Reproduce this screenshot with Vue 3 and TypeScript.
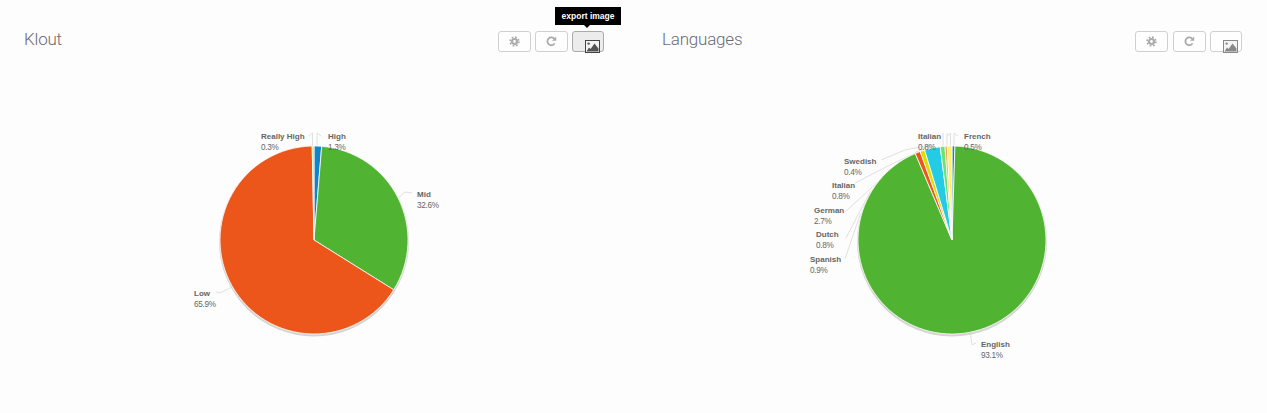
<script setup lang="ts">
interface Slice { from: number; to: number; color: string }
interface Label { x: number; y: number; name: string; value: string }
interface Chart {
  title: string
  viewBox: string
  cx: number
  slices: Slice[]
  lines: string[]
  labels: Label[]
  tip: boolean
}

const CY = 240
const R = 94

function slicePath(cx: number, s: Slice): string {
  const rad = (d: number) => (d * Math.PI) / 180
  const x1 = cx + R * Math.sin(rad(s.from))
  const y1 = CY - R * Math.cos(rad(s.from))
  const x2 = cx + R * Math.sin(rad(s.to))
  const y2 = CY - R * Math.cos(rad(s.to))
  const large = s.to - s.from > 180 ? 1 : 0
  return `M${cx} ${CY}L${x1.toFixed(2)} ${y1.toFixed(2)}A${R} ${R} 0 ${large} 1 ${x2.toFixed(2)} ${y2.toFixed(2)}Z`
}

const charts: Chart[] = [
  {
    title: 'Klout',
    viewBox: '0 70 638 343',
    cx: 314,
    tip: true,
    slices: [
      { from: 0, to: 4.7, color: '#0f84c8' },
      { from: 4.7, to: 122, color: '#50b432' },
      { from: 122, to: 358.9, color: '#ed561b' },
      { from: 358.9, to: 360, color: '#dddf00' },
    ],
    lines: [
      '312.5 150 312.5 133 309 136',
      '317 150 317 133 321 136',
      '396 200 405 192 412 193',
      '234 286 220 293 216 292',
    ],
    labels: [
      { x: 261, y: 139, name: 'Really High', value: '0.3%' },
      { x: 328, y: 139, name: 'High', value: '1.3%' },
      { x: 417, y: 197, name: 'Mid', value: '32.6%' },
      { x: 194, y: 296, name: 'Low', value: '65.9%' },
    ],
  },
  {
    title: 'Languages',
    viewBox: '638 70 629 343',
    cx: 952,
    tip: false,
    slices: [
      { from: 0, to: 1.8, color: '#0f84c8' },
      { from: 1.8, to: 337, color: '#50b432' },
      { from: 337, to: 340.2, color: '#ed561b' },
      { from: 340.2, to: 343.1, color: '#dddf00' },
      { from: 343.1, to: 352.8, color: '#24cbe5' },
      { from: 352.8, to: 355.7, color: '#64e572' },
      { from: 355.7, to: 357.1, color: '#ff9655' },
      { from: 357.1, to: 360, color: '#fff263' },
    ],
    lines: [
      '845 259 860 215 917 151',
      '846 238 870 192 921 149',
      '845 212 880 180 925 147',
      '855 183 890 165 930 146',
      '881 160 905 150 935 144',
      '943 150 943 133',
      '947 150 947 133',
      '950.5 150 950.5 133 947.5 136',
      '954 150 954 133 958 136',
      '970 330 972 345 976 343',
    ],
    labels: [
      { x: 918, y: 139, name: 'Italian', value: '0.8%' },
      { x: 964, y: 139, name: 'French', value: '0.5%' },
      { x: 844, y: 164, name: 'Swedish', value: '0.4%' },
      { x: 832, y: 188, name: 'Italian', value: '0.8%' },
      { x: 814, y: 213, name: 'German', value: '2.7%' },
      { x: 816, y: 237, name: 'Dutch', value: '0.8%' },
      { x: 810, y: 262, name: 'Spanish', value: '0.9%' },
      { x: 981, y: 347, name: 'English', value: '93.1%' },
    ],
  },
]
</script>

<template>
  <div class="page">
    <section v-for="c in charts" :key="c.title" class="panel">
      <header class="head">
        <h2 class="title">{{ c.title }}</h2>
        <div class="tools">
          <button class="btn" type="button" aria-label="settings">
            <svg width="11" height="11" viewBox="0 0 11 11">
              <circle cx="5.5" cy="5.5" r="4.4" fill="none" stroke="#aaa" stroke-width="1.6" stroke-dasharray="1.73 1.73" />
              <circle cx="5.5" cy="5.5" r="2.5" fill="none" stroke="#aaa" stroke-width="2.2" />
            </svg>
          </button>
          <button class="btn" type="button" aria-label="reload">
            <svg width="11" height="11" viewBox="0 0 11 11">
              <path d="M8.6 7.4A3.9 3.9 0 1 1 8.4 3" fill="none" stroke="#aaa" stroke-width="1.8" />
              <path d="M10.2 0.6V4.8H6Z" fill="#aaa" />
            </svg>
          </button>
          <div class="img-wrap">
            <button class="btn img" :class="{ on: c.tip }" type="button" aria-label="export image">
              <svg class="pic" width="15" height="13" viewBox="0 0 15 13">
                <rect x="0.5" y="0.5" width="14" height="12" fill="#f4f4f4" :stroke="c.tip ? '#444' : '#888'" />
                <circle cx="3.6" cy="3.6" r="1.2" :fill="c.tip ? '#555' : '#888'" />
                <path d="M1.5 11.5L4 7.5L5.6 9L9.5 3.5L13.5 8.5V11.5Z" :fill="c.tip ? '#555' : '#888'" />
              </svg>
            </button>
            <div v-if="c.tip" class="tip">export image</div>
          </div>
        </div>
      </header>
      <svg class="chart" :viewBox="c.viewBox" role="img" :aria-label="c.title">
        <polyline v-for="(l, i) in c.lines" :key="'l' + i" :points="l" fill="none" stroke="#e0e0e0" stroke-width="1" />
        <circle :cx="c.cx" :cy="CY + 1.5" :r="R + 1" fill="#d4d4d0" />
        <path v-for="(s, i) in c.slices" :key="i" :d="slicePath(c.cx, s)" :fill="s.color" stroke="#fff" stroke-width="0.8" stroke-linejoin="round" />
        <g v-for="(l, i) in c.labels" :key="'t' + i">
          <text class="name" :x="l.x" :y="l.y">{{ l.name }}</text>
          <text class="value" :x="l.x" :y="l.y + 11">{{ l.value }}</text>
        </g>
      </svg>
    </section>
  </div>
</template>

<style scoped>
.page {
  display: grid;
  grid-template-columns: 638px 629px;
  width: 1267px;
  height: 413px;
  overflow: hidden;
  background: #fdfdfd;
  font-family: "Liberation Sans", Arial, sans-serif;
}
.panel {
  display: flex;
  flex-direction: column;
  min-width: 0;
}
.head {
  display: flex;
  justify-content: space-between;
  align-items: flex-start;
  height: 70px;
  padding: 0 34px 0 24px;
  box-sizing: border-box;
}
.panel:last-child .head {
  padding-right: 25px;
}
.panel:last-child .tools {
  gap: 4.5px;
}
.title {
  margin: 29px 0 0;
  font-family: Roboto, "Liberation Sans", sans-serif;
  font-size: 17px;
  line-height: 21px;
  font-weight: 300;
  letter-spacing: -0.2px;
  color: #6b6b72;
}
.tools {
  display: flex;
  gap: 4px;
  margin-top: 31px;
}
.btn {
  display: flex;
  align-items: center;
  justify-content: center;
  width: 33px;
  height: 21px;
  padding: 0;
  border: 1px solid #d0d0d0;
  border-radius: 3px;
  background: #fefefe;
  box-sizing: border-box;
}
.img-wrap {
  position: relative;
}
.img {
  position: relative;
  width: 32px;
}
.img.on {
  background: #ececec;
  border-color: #aaa;
}
.pic {
  position: absolute;
  right: 3px;
  top: 8px;
}
.tip {
  position: absolute;
  left: -17px;
  top: -24px;
  width: 66px;
  height: 18px;
  background: #000;
  color: #fff;
  font-size: 8.5px;
  font-weight: 700;
  line-height: 18px;
  text-align: center;
}
.tip::after {
  content: "";
  position: absolute;
  left: 29px;
  top: 18px;
  border: 3px solid transparent;
  border-top-color: #000;
  border-bottom: 0;
}
.chart {
  display: block;
  width: 100%;
  height: 343px;
}
.name {
  font-size: 8px;
  font-weight: 700;
  fill: #666;
}
.value {
  font-size: 8.2px;
  letter-spacing: -0.3px;
  fill: #666;
}
</style>

<style>
html, body {
  margin: 0;
  overflow: hidden;
  background: #fdfdfd;
}
</style>
